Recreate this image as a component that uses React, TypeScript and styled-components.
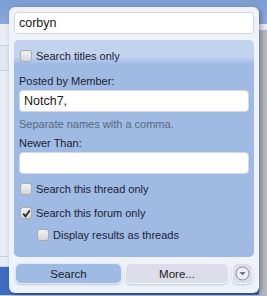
import React, { useState } from 'react';
import styled, { createGlobalStyle } from 'styled-components';

const GlobalStyle = createGlobalStyle`
  body {
    margin: 0;
    font-family: 'Liberation Sans', Arial, sans-serif;
    overflow: hidden;
  }
`;

const Page = styled.div`
  position: relative;
  width: 267px;
  height: 296px;
  background: #e8edf5;
  overflow: hidden;
`;

const Header = styled.div`
  height: 24px;
  background: linear-gradient(#7d9dd3, #8aa8db);
`;

const Body = styled.div`
  display: flex;
  height: 272px;
`;

const Main = styled.div`
  flex: 1;
  display: flex;
  flex-direction: column;
`;

const Sidebar = styled.div`
  width: 8px;
  margin-top: 6px;
  background: #b4b8c0;
`;

const Row = styled.div<{ $h: number; $bg?: string }>`
  height: ${({ $h }) => $h}px;
  background: ${({ $bg }) => $bg || 'transparent'};
  border-bottom: 1px solid #c3d0e6;
`;

const Popup = styled.div`
  position: absolute;
  left: 9px;
  top: 7px;
  width: 250px;
  height: 286px;
  box-sizing: border-box;
  padding: 5px;
  background: #eef2fa;
  border-radius: 6px;
  box-shadow: 2px 2px 5px rgba(0, 0, 0, 0.35);
`;

const TextInput = styled.input`
  display: block;
  box-sizing: border-box;
  width: 100%;
  height: 22px;
  padding: 0 4px;
  border: 1px solid #d3d8e0;
  border-radius: 4px;
  background: #fff;
  font-family: 'Liberation Sans', Arial, sans-serif;
  font-size: 12.5px;
  color: #1a1a1a;
  outline: none;
`;

const Panel = styled.div`
  margin-top: 6px;
  padding: 5px 5px 11px;
  border-radius: 5px;
  background: linear-gradient(#c2d3ee 0, #c2d3ee 17px, #9fbae3 24px, #9fbae3 100%);
`;

const CheckRow = styled.label<{ $indent?: boolean }>`
  display: flex;
  align-items: center;
  height: 22px;
  padding-left: ${({ $indent }) => ($indent ? 18 : 1)}px;
  font-size: 11px;
  color: #1c2236;
  cursor: pointer;
`;

const Box = styled.span`
  display: flex;
  align-items: center;
  justify-content: center;
  box-sizing: border-box;
  width: 12px;
  height: 12px;
  margin-right: 4px;
  border: 1px solid #a9abb0;
  border-radius: 3px;
  background: linear-gradient(#f2f2f2, #d6d6d8);
`;

const FieldLabel = styled.div<{ $top: number }>`
  height: 16px;
  line-height: 16px;
  margin-top: ${({ $top }) => $top}px;
  font-size: 11px;
  color: #1c2236;
`;

const Hint = styled(FieldLabel)`
  color: #5a687c;
`;

const FieldInput = styled(TextInput)<{ $top: number }>`
  margin-top: ${({ $top }) => $top}px;
`;

const Gap = styled.div<{ $h: number }>`
  height: ${({ $h }) => $h}px;
`;

const Footer = styled.div`
  display: flex;
  gap: 3px;
  margin-top: 6px;
  padding: 0 1px;
`;

const Button = styled.button<{ $variant: 'primary' | 'secondary' | 'icon' }>`
  box-sizing: border-box;
  height: 21px;
  width: ${({ $variant }) => ($variant === 'primary' ? '107px' : $variant === 'icon' ? '21px' : 'auto')};
  flex: ${({ $variant }) => ($variant === 'secondary' ? 1 : 'none')};
  display: flex;
  align-items: center;
  justify-content: center;
  padding: 0;
  border: 1px solid rgba(255, 255, 255, 0.7);
  border-radius: 6px;
  background: ${({ $variant }) => ($variant === 'primary' ? '#9fbae3' : '#dcdde8')};
  box-shadow: 0 1px 2px rgba(0, 0, 0, 0.18);
  font-family: 'Liberation Sans', Arial, sans-serif;
  font-size: 11.5px;
  color: #1c1c2a;
  cursor: pointer;
`;

const Check: React.FC<{ checked: boolean }> = ({ checked }) => (
  <Box>
    {checked && (
      <svg width="9" height="9" viewBox="0 0 9 9">
        <path d="M1.2 4.6 L3.5 7.2 L7.8 1.4" fill="none" stroke="#2a2a2a" strokeWidth="1.8" />
      </svg>
    )}
  </Box>
);

const App: React.FC = () => {
  const [titles, setTitles] = useState(false);
  const [thread, setThread] = useState(false);
  const [forum, setForum] = useState(true);
  const [asThreads, setAsThreads] = useState(false);

  return (
    <>
      <GlobalStyle />
      <Page>
        <Header />
        <Body>
          <Main>
            <Row $h={21} />
            <Row $h={24} $bg="#e2e8f2" />
            <Row $h={188} />
            <Row $h={9} />
            <Row $h={28} $bg="#3f6cc2" />
          </Main>
          <Sidebar />
        </Body>
        <Popup>
          <TextInput defaultValue="corbyn" />
          <Panel>
            <CheckRow onClick={() => setTitles(!titles)}>
              <Check checked={titles} />
              Search titles only
            </CheckRow>
            <FieldLabel $top={6}>Posted by Member:</FieldLabel>
            <FieldInput $top={1} defaultValue="Notch7," />
            <Hint $top={4}>Separate names with a comma.</Hint>
            <FieldLabel $top={3}>Newer Than:</FieldLabel>
            <FieldInput $top={1} />
            <Gap $h={4} />
            <CheckRow onClick={() => setThread(!thread)}>
              <Check checked={thread} />
              Search this thread only
            </CheckRow>
            <Gap $h={2} />
            <CheckRow onClick={() => setForum(!forum)}>
              <Check checked={forum} />
              Search this forum only
            </CheckRow>
            <CheckRow $indent onClick={() => setAsThreads(!asThreads)}>
              <Check checked={asThreads} />
              Display results as threads
            </CheckRow>
          </Panel>
          <Footer>
            <Button $variant="primary">Search</Button>
            <Button $variant="secondary">More...</Button>
            <Button $variant="icon">
              <svg width="15" height="15" viewBox="0 0 15 15">
                <circle cx="7.5" cy="7.5" r="6.5" fill="#ecedf2" stroke="#8e9098" strokeWidth="1" />
                <path d="M4.5 6 L10.5 6 L7.5 9.5 Z" fill="#6e7078" />
              </svg>
            </Button>
          </Footer>
        </Popup>
      </Page>
    </>
  );
};

export default App;
